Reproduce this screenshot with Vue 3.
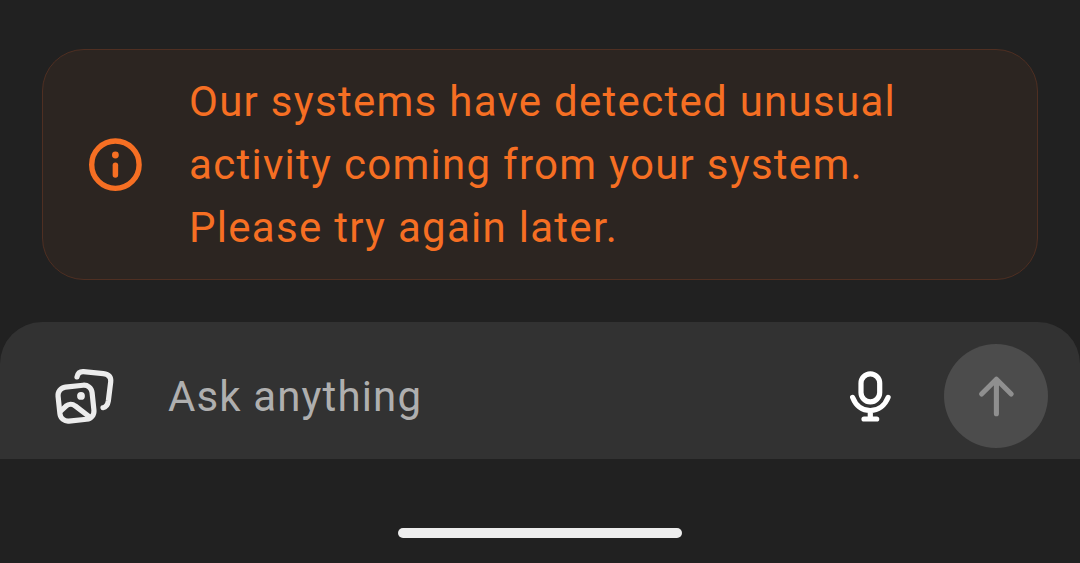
<script setup>
const notice = [
  'Our systems have detected unusual',
  'activity coming from your system.',
  'Please try again later.',
]
</script>

<template>
  <main class="screen">
    <section class="notice" role="alert">
      <svg class="info" viewBox="0 0 54 54" aria-hidden="true">
        <circle cx="27.4" cy="26.7" r="23.7" fill="none" stroke="currentColor" stroke-width="5.4" />
        <circle cx="27.4" cy="17" r="3.4" fill="currentColor" />
        <path d="M27.4 27.2v9.8" fill="none" stroke="currentColor" stroke-width="5.5" stroke-linecap="round" />
      </svg>
      <p class="message">
        <span v-for="line in notice" :key="line" class="line">{{ line }}</span>
      </p>
    </section>

    <section class="composer">
      <svg class="images" viewBox="0 0 62 60" aria-hidden="true">
        <g transform="translate(0 .9)">
          <g fill="none" stroke="currentColor" stroke-width="5.2" stroke-linecap="round" stroke-linejoin="round">
            <path d="M23 10C23.7 6.5 25.6 4.5 29.5 4.7L49.3 6.7C54.6 7.4 57.2 10.3 56.7 15L54.3 34.2C53.7 38 52.2 40.2 49 40.8" />
            <rect x="4.9" y="19.2" width="34.2" height="34.2" rx="8.2" transform="rotate(-6 22 36.3)" />
            <path d="M7.4 43.5L12 39.2C14.7 36.9 18.4 36.7 21.2 39L36 50.4" />
          </g>
          <circle cx="27" cy="29" r="3.9" fill="currentColor" />
        </g>
      </svg>
      <span class="placeholder">Ask anything</span>
      <svg class="mic" viewBox="0 0 45 55" aria-hidden="true">
        <g fill="none" stroke="currentColor" stroke-width="5.2" stroke-linecap="round" stroke-linejoin="round">
          <rect x="13" y="4.8" width="18.7" height="28" rx="9.35" />
          <path d="M4.6 28.4C7.8 36.5 14.2 41.6 22.3 41.6S36.9 36.5 40.1 28.4M22.3 42v8M16 50h12.7" />
        </g>
      </svg>
      <button class="send" type="button" aria-label="Send">
        <svg viewBox="0 0 104 104" aria-hidden="true">
          <path d="M52.4 69.7V35.2M37.6 50L52.4 35.2L67.2 50" fill="none" stroke="currentColor" stroke-width="5.1" stroke-linecap="round" stroke-linejoin="round" />
        </svg>
      </button>
    </section>

    <footer class="navigation"><span class="handle"></span></footer>
  </main>
</template>

<style>
body {
  margin: 0;
  background: #212121;
}
</style>

<style scoped>
.screen {
  display: flex;
  flex-direction: column;
  box-sizing: border-box;
  width: 1080px;
  height: 563px;
  padding-top: 49px;
  overflow: hidden;
  background: #212121;
  font-family: Roboto, sans-serif;
  font-size: 42px;
  letter-spacing: 1.28px;
}
.notice {
  display: flex;
  align-items: center;
  box-sizing: border-box;
  height: 231px;
  margin: 0 42px;
  padding: 0 45px;
  border: 1px solid #4f2f22;
  border-radius: 42px;
  background: #2c2521;
  color: #f66f23;
}
.info {
  flex: none;
  width: 54px;
  height: 54px;
}
.message {
  margin: 0 0 0 47px;
  line-height: 63px;
  white-space: nowrap;
}
.line {
  display: block;
}
.composer {
  display: flex;
  align-items: center;
  box-sizing: border-box;
  height: 137px;
  margin-top: 42px;
  padding: 11px 32px 0 54px;
  border-radius: 42px 42px 0 0;
  background: #323232;
  color: #fff;
}
.images {
  flex: none;
  width: 62px;
  height: 60px;
  color: #ececec;
}
.placeholder {
  flex: 1;
  margin-left: 52px;
  line-height: 63px;
  letter-spacing: 1.13px;
  color: #afafaf;
}
.mic {
  flex: none;
  width: 45px;
  height: 55px;
  margin-right: 51px;
}
.send {
  flex: none;
  width: 104px;
  height: 104px;
  padding: 0;
  border: 0;
  border-radius: 50%;
  background: #4c4c4c;
  color: #8f8f8f;
}
.send svg {
  display: block;
}
.navigation {
  display: flex;
  justify-content: center;
  padding-top: 69px;
}
.handle {
  width: 284px;
  height: 10px;
  border-radius: 5px;
  background: #ededed;
}
</style>
